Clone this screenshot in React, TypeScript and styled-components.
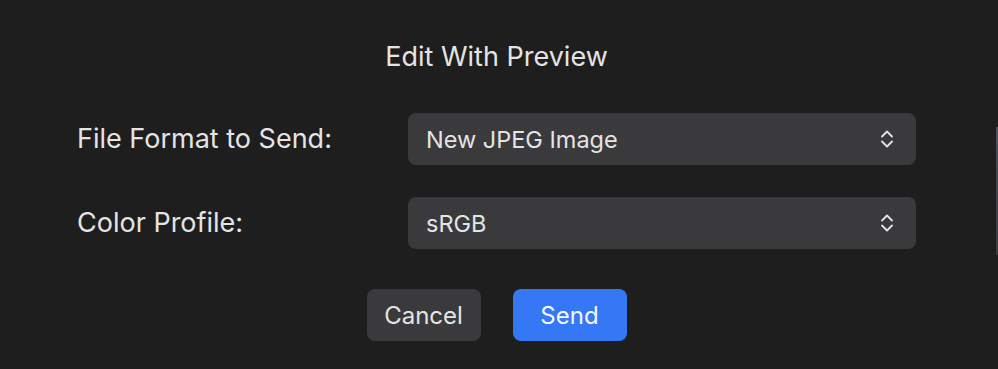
import React from "react";
import styled, { createGlobalStyle } from "styled-components";

const GlobalStyle = createGlobalStyle`
  html, body {
    margin: 0;
    padding: 0;
    background: #1e1e1e;
  }
  body {
    font-family: Inter, "Liberation Sans", sans-serif;
    -webkit-font-smoothing: antialiased;
  }
`;

const Sheet = styled.div`
  position: relative;
  width: 998px;
  height: 369px;
  box-sizing: border-box;
  padding: 42px 82px 0 77px;
  background: #1e1e1e;
  color: #e4e4e4;
  overflow: hidden;
`;

const Title = styled.h1`
  margin: 0;
  font-size: 27px;
  font-weight: 400;
  line-height: 30px;
  text-align: center;
`;

const Form = styled.div`
  display: grid;
  grid-template-columns: 331px 1fr;
  row-gap: 32px;
  margin-top: 41px;
`;

const Label = styled.label`
  display: flex;
  align-items: center;
  font-size: 27px;
  line-height: 52px;
`;

const Popup = styled.div`
  display: flex;
  align-items: center;
  justify-content: space-between;
  height: 52px;
  padding: 0 22px 0 18px;
  border-radius: 8px;
  background: #3a3a3c;
  font-size: 23.5px;
`;

const Actions = styled.div`
  display: flex;
  justify-content: center;
  gap: 32px;
  margin-top: 40px;
`;

const Button = styled.button<{ $primary?: boolean }>`
  width: 114px;
  height: 52px;
  padding: 0;
  border: none;
  border-radius: 8px;
  font-family: inherit;
  font-size: 24px;
  color: ${(p) => (p.$primary ? "#f4f7ff" : "#e4e4e4")};
  background: ${(p) => (p.$primary ? "#3478f6" : "#3a3a3c")};
`;

const EdgeStrip = styled.div`
  position: absolute;
  right: 0;
  top: 127px;
  width: 2px;
  height: 128px;
  background: linear-gradient(#4a5360 0%, #434a54 30%, #3a3d42 100%);
`;

const Stepper = () => (
  <svg width="14" height="22" viewBox="0 0 14 22" fill="none">
    <path
      d="M2 8.5 L7 3.5 L12 8.5"
      stroke="#e4e4e4"
      strokeWidth="1.8"
      strokeLinecap="round"
      strokeLinejoin="round"
    />
    <path
      d="M2 13.5 L7 18.5 L12 13.5"
      stroke="#e4e4e4"
      strokeWidth="1.8"
      strokeLinecap="round"
      strokeLinejoin="round"
    />
  </svg>
);

const rows = [
  { label: "File Format to Send:", value: "New JPEG Image" },
  { label: "Color Profile:", value: "sRGB" },
];

export default function App() {
  return (
    <>
      <GlobalStyle />
      <Sheet>
        <Title>Edit With Preview</Title>
        <Form>
          {rows.map((r) => (
            <React.Fragment key={r.label}>
              <Label>{r.label}</Label>
              <Popup>
                <span>{r.value}</span>
                <Stepper />
              </Popup>
            </React.Fragment>
          ))}
        </Form>
        <Actions>
          <Button>Cancel</Button>
          <Button $primary>Send</Button>
        </Actions>
        <EdgeStrip />
      </Sheet>
    </>
  );
}
